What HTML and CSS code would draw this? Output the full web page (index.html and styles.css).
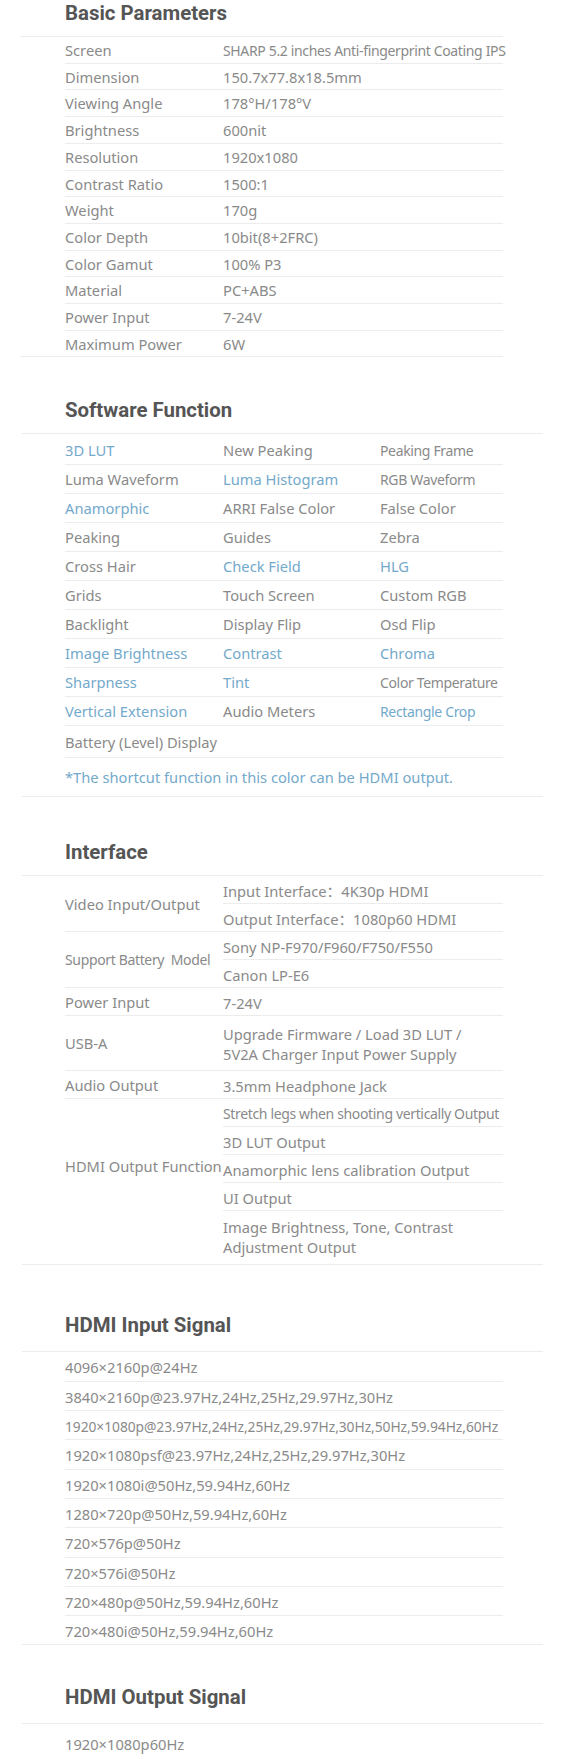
FILE: index.html
```html
<!DOCTYPE html>
<html lang="en">
<head>
<meta charset="utf-8">
<title>Specifications</title>
<link rel="stylesheet" href="styles.css">
</head>
<body>
<main class="page">

  <section class="spec spec--basic">
    <h2 class="spec-title">Basic Parameters</h2>
    <div class="spec-body">
      <div class="kv-row"><span>Screen</span><span class="tight">SHARP 5.2 inches Anti-fingerprint Coating IPS</span></div>
      <div class="kv-row"><span>Dimension</span><span>150.7x77.8x18.5mm</span></div>
      <div class="kv-row"><span>Viewing Angle</span><span>178°H/178°V</span></div>
      <div class="kv-row"><span>Brightness</span><span>600nit</span></div>
      <div class="kv-row"><span>Resolution</span><span>1920x1080</span></div>
      <div class="kv-row"><span>Contrast Ratio</span><span>1500:1</span></div>
      <div class="kv-row"><span>Weight</span><span>170g</span></div>
      <div class="kv-row"><span>Color Depth</span><span>10bit(8+2FRC)</span></div>
      <div class="kv-row"><span>Color Gamut</span><span>100% P3</span></div>
      <div class="kv-row"><span>Material</span><span>PC+ABS</span></div>
      <div class="kv-row"><span>Power Input</span><span>7-24V</span></div>
      <div class="kv-row"><span>Maximum Power</span><span>6W</span></div>
    </div>
  </section>

  <section class="spec spec--software">
    <h2 class="spec-title">Software Function</h2>
    <div class="spec-body">
      <div class="fn-row fn-row--first"><span class="hl">3D LUT</span><span>New Peaking</span><span class="tight">Peaking Frame</span></div>
      <div class="fn-row"><span>Luma Waveform</span><span class="hl">Luma Histogram</span><span class="tight">RGB Waveform</span></div>
      <div class="fn-row"><span class="hl">Anamorphic</span><span>ARRI False Color</span><span>False Color</span></div>
      <div class="fn-row"><span>Peaking</span><span>Guides</span><span>Zebra</span></div>
      <div class="fn-row"><span>Cross Hair</span><span class="hl">Check Field</span><span class="hl">HLG</span></div>
      <div class="fn-row"><span>Grids</span><span>Touch Screen</span><span>Custom RGB</span></div>
      <div class="fn-row"><span>Backlight</span><span>Display Flip</span><span>Osd Flip</span></div>
      <div class="fn-row"><span class="hl">Image Brightness</span><span class="hl">Contrast</span><span class="hl">Chroma</span></div>
      <div class="fn-row"><span class="hl">Sharpness</span><span class="hl">Tint</span><span class="tight">Color Temperature</span></div>
      <div class="fn-row"><span class="hl">Vertical Extension</span><span>Audio Meters</span><span class="hl tight">Rectangle Crop</span></div>
      <div class="fn-row fn-row--last"><span>Battery (Level) Display</span></div>
      <p class="fn-note">*The shortcut function in this color can be HDMI output.</p>
    </div>
  </section>

  <section class="spec spec--interface">
    <h2 class="spec-title">Interface</h2>
    <div class="spec-body">
      <div class="if-row">
        <div class="if-label">Video Input/Output</div>
        <div class="if-values">
          <div class="if-val">Input Interface：4K30p HDMI</div>
          <div class="if-val">Output Interface：1080p60 HDMI</div>
        </div>
      </div>
      <div class="if-row">
        <div class="if-label tight">Support Battery&nbsp; Model</div>
        <div class="if-values">
          <div class="if-val">Sony NP-F970/F960/F750/F550</div>
          <div class="if-val">Canon LP-E6</div>
        </div>
      </div>
      <div class="if-row">
        <div class="if-label">Power Input</div>
        <div class="if-values">
          <div class="if-val">7-24V</div>
        </div>
      </div>
      <div class="if-row">
        <div class="if-label">USB-A</div>
        <div class="if-values">
          <div class="if-val if-val--multi">Upgrade Firmware / Load 3D LUT /<br>5V2A Charger Input Power Supply</div>
        </div>
      </div>
      <div class="if-row">
        <div class="if-label">Audio Output</div>
        <div class="if-values">
          <div class="if-val">3.5mm Headphone Jack</div>
        </div>
      </div>
      <div class="if-row">
        <div class="if-label if-label--raised">HDMI Output Function</div>
        <div class="if-values">
          <div class="if-val tight">Stretch legs when shooting vertically Output</div>
          <div class="if-val">3D LUT Output</div>
          <div class="if-val">Anamorphic lens calibration Output</div>
          <div class="if-val">UI Output</div>
          <div class="if-val if-val--end">Image Brightness, Tone, Contrast<br>Adjustment Output</div>
        </div>
      </div>
    </div>
  </section>

  <section class="spec spec--input">
    <h2 class="spec-title spec-title--roomy">HDMI Input Signal</h2>
    <div class="spec-body">
      <div class="sig-row">4096×2160p@24Hz</div>
      <div class="sig-row">3840×2160p@23.97Hz,24Hz,25Hz,29.97Hz,30Hz</div>
      <div class="sig-row sig-row--small">1920×1080p@23.97Hz,24Hz,25Hz,29.97Hz,30Hz,50Hz,59.94Hz,60Hz</div>
      <div class="sig-row">1920×1080psf@23.97Hz,24Hz,25Hz,29.97Hz,30Hz</div>
      <div class="sig-row">1920×1080i@50Hz,59.94Hz,60Hz</div>
      <div class="sig-row">1280×720p@50Hz,59.94Hz,60Hz</div>
      <div class="sig-row">720×576p@50Hz</div>
      <div class="sig-row">720×576i@50Hz</div>
      <div class="sig-row">720×480p@50Hz,59.94Hz,60Hz</div>
      <div class="sig-row">720×480i@50Hz,59.94Hz,60Hz</div>
    </div>
  </section>

  <section class="spec spec--output">
    <h2 class="spec-title spec-title--roomy">HDMI Output Signal</h2>
    <div class="spec-body spec-body--open">
      <div class="sig-row sig-row--single">1920×1080p60Hz</div>
    </div>
  </section>

</main>
</body>
</html>
```
FILE: styles.css
```css
* {
  box-sizing: border-box;
}

body {
  margin: 0;
  background: #ffffff;
  font-family: "Noto Sans", "Noto Sans CJK SC", sans-serif;
  font-size: 14.7px;
  color: #8a8a8a;
}

.page {
  width: 579px;
  overflow: hidden;
}

.spec-title {
  margin: 0 0 0 65px;
  padding-bottom: 10px;
  font-family: Roboto, "Noto Sans", sans-serif;
  font-weight: 700;
  font-size: 20.4px;
  line-height: 26px;
  color: #555555;
}

.spec-title--roomy {
  padding-bottom: 13px;
}

.spec-body {
  margin-left: 22px;
  width: 521px;
  padding: 0 40px 0 43px;
  border-top: 1px solid #ececec;
  border-bottom: 1px solid #ececec;
}

.spec-body--open {
  border-bottom: none;
}

.spec--basic .spec-body {
  margin-left: 20px;
  width: 483px;
  padding: 0 0 0 45px;
}

.spec--software { margin-top: 40px; }
.spec--interface { margin-top: 42px; }
.spec--input { margin-top: 47px; }
.spec--output { margin-top: 39px; }

.tight {
  font-size: 14px;
  letter-spacing: -0.35px;
}

.hl {
  color: #73a9cb;
}

/* Basic parameters */
.kv-row {
  display: grid;
  grid-template-columns: 158px 1fr;
  padding-top: 2px;
  line-height: 23.7px;
  border-bottom: 1px solid #ececec;
  white-space: nowrap;
}

.kv-row:last-child {
  border-bottom: none;
}

/* Software function */
.fn-row {
  display: grid;
  grid-template-columns: 158px 157px 1fr;
  padding-top: 1px;
  line-height: 27px;
  border-bottom: 1px solid #ececec;
  white-space: nowrap;
}

.fn-row--first {
  padding-top: 3px;
}

.fn-row--last {
  padding: 3px 0 1px;
}

.fn-note {
  margin: 0;
  padding: 6px 0;
  line-height: 26px;
  color: #73a9cb;
  white-space: nowrap;
}

/* Interface */
.if-row {
  display: grid;
  grid-template-columns: 158px 1fr;
  border-bottom: 1px solid #ececec;
}

.if-row:last-child {
  border-bottom: none;
}

.if-label {
  align-self: center;
  white-space: nowrap;
  line-height: 24px;
}

.if-label--raised {
  padding-bottom: 32px;
}

.if-val {
  padding-top: 3px;
  line-height: 24px;
  border-bottom: 1px solid #ececec;
  white-space: nowrap;
}

.if-val:last-child {
  border-bottom: none;
}

.if-val--multi {
  padding: 8px 0 6px;
  line-height: 20px;
}

.if-val--end {
  padding: 6px 0 7px;
  line-height: 20px;
}

/* Signals */
.sig-row {
  padding-top: 3px;
  line-height: 25.3px;
  border-bottom: 1px solid #ececec;
  white-space: nowrap;
}

.sig-row:last-child {
  border-bottom: none;
}

.sig-row--small {
  font-size: 13.8px;
  letter-spacing: -0.05px;
}

.sig-row--single {
  padding-top: 6px;
  line-height: 28px;
}
```
